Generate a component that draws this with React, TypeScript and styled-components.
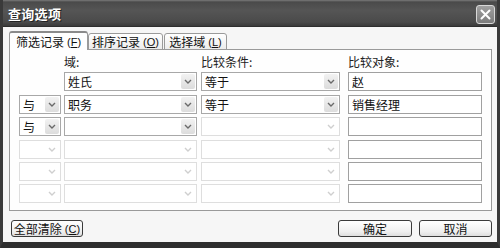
import React from "react";
import styled, { createGlobalStyle } from "styled-components";

const Global = createGlobalStyle`
  html, body { margin: 0; padding: 0; background: #fff; }
  body { font-family: "Noto Sans CJK SC", "Liberation Sans", sans-serif; font-size: 12px; }
`;

const Window = styled.div`
  width: 500px;
  height: 248px;
  box-sizing: border-box;
  background: #f6f6f6;
  border-left: 3px solid #3a3a3a;
  border-right: 3px solid #3a3a3a;
  border-bottom: 6px solid #2e2e2e;
  display: flex;
  flex-direction: column;
  overflow: hidden;
`;

const TitleBar = styled.div`
  height: 27px;
  margin: 0 -3px;
  padding: 0 5px 0 8px;
  box-sizing: border-box;
  display: flex;
  align-items: center;
  justify-content: space-between;
  background: linear-gradient(#7a7a7a 0, #4a4a4a 2px, #555 40%, #4a4a4a 85%, #3a3a3a 100%);
  border-bottom: 1px solid #2e2e2e;
`;

const Title = styled.span`
  color: #fff;
  font-weight: bold;
  font-size: 13px;
  letter-spacing: 0.3px;
  text-shadow: 1px 1px 0 #222;
`;

const CloseBtn = styled.div`
  width: 19px;
  height: 19px;
  box-sizing: border-box;
  margin-top: 2px;
  border: 1px solid #d8d8d8;
  border-radius: 3px;
  background: linear-gradient(#a0a0a0, #7c7c7c);
  display: flex;
  align-items: center;
  justify-content: center;
`;

const Body = styled.div`
  flex: 1;
  padding: 5px 5px 0 6px;
  display: flex;
  flex-direction: column;
`;

const Tabs = styled.div`
  display: flex;
  align-items: flex-end;
  height: 18px;
  position: relative;
  z-index: 1;
  margin-bottom: -1px;
`;

const Tab = styled.div<{ $active?: boolean; $w: number }>`
  width: ${(p) => p.$w}px;
  height: ${(p) => (p.$active ? 19 : 17)}px;
  box-sizing: border-box;
  border: 1px solid #9a9a9a;
  border-bottom: ${(p) => (p.$active ? "none" : "1px solid #9a9a9a")};
  border-radius: 3px 3px 0 0;
  background: ${(p) => (p.$active ? "#fefefe" : "linear-gradient(#ffffff, #ececec)")};
  display: flex;
  align-items: center;
  justify-content: center;
  color: #111;
  font-size: 12px;
  margin-right: ${(p) => (p.$active ? 0 : 1)}px;
  ${(p) => (p.$active ? "border-top: 2px solid #8a8a8a;" : "")}
`;

const Key = styled.span`
  font-family: "Liberation Sans", sans-serif;
  font-size: 11px;
  margin-left: 3px;
`;

const Panel = styled.div`
  height: 162px;
  box-sizing: border-box;
  border: 1px solid #9a9a9a;
  background: #fefefe;
  padding: 5px 6px 0 9px;
  display: grid;
  grid-template-columns: 42px 133px 140px 139px;
  column-gap: 3px;
  grid-auto-rows: 19px;
  row-gap: 3.4px;
  grid-template-rows: 14px;
  align-content: start;
`;

const Label = styled.div<{ $col: number }>`
  grid-column: ${(p) => p.$col};
  font-size: 12px;
  line-height: 14px;
  color: #222;
  margin-bottom: 1px;
`;

const Combo = styled.div<{ $disabled?: boolean; $ml?: number }>`
  box-sizing: border-box;
  height: 19px;
  margin-left: ${(p) => p.$ml || 0}px;
  border: 1px solid ${(p) => (p.$disabled ? "#dedede" : "#a8a8a8")};
  background: #fff;
  display: flex;
  align-items: center;
  padding-left: 3px;
  font-size: 12px;
  color: #111;
`;

const ComboText = styled.span`
  flex: 1;
  line-height: 17px;
`;

const DropBtn = styled.div<{ $disabled?: boolean }>`
  width: 14px;
  height: 15px;
  margin-right: 1px;
  border-radius: 2px;
  background: ${(p) => (p.$disabled ? "transparent" : "linear-gradient(#f2f2f2, #dcdcdc)")};
  display: flex;
  align-items: center;
  justify-content: center;
`;

const TextBox = styled.div<{ $ml?: number }>`
  box-sizing: border-box;
  height: 19px;
  margin-left: ${(p) => p.$ml || 0}px;
  border: 1px solid #a0a0a0;
  background: #fff;
  padding-left: 3px;
  font-size: 12px;
  line-height: 17px;
  color: #111;
`;

const Empty = styled.div``;

const Footer = styled.div`
  display: flex;
  align-items: center;
  margin-top: 9px;
  padding-left: 2px;
`;

const Button = styled.div<{ $w: number; $ml?: number }>`
  width: ${(p) => p.$w}px;
  height: 17px;
  box-sizing: border-box;
  margin-left: ${(p) => p.$ml || 0}px;
  border: 1px solid #3a3a3a;
  border-radius: 3px;
  background: linear-gradient(#ffffff, #efefef 70%, #dedede);
  display: flex;
  align-items: center;
  justify-content: center;
  font-size: 12px;
  color: #111;
`;

const Spacer = styled.div`
  flex: 1;
`;

const Chevron = ({ disabled }: { disabled?: boolean }) => (
  <svg width="8" height="5" viewBox="0 0 8 5">
    <path
      d="M1 1 L4 4 L7 1"
      fill="none"
      stroke={disabled ? "#cfcfcf" : "#6a6a6a"}
      strokeWidth="1.4"
    />
  </svg>
);

const ComboBox = ({ text, disabled, ml }: { text?: string; disabled?: boolean; ml?: number }) => (
  <Combo $disabled={disabled} $ml={ml}>
    <ComboText>{text}</ComboText>
    <DropBtn $disabled={disabled}>
      <Chevron disabled={disabled} />
    </DropBtn>
  </Combo>
);

type Row = {
  conj?: string | null;
  conjDisabled?: boolean;
  field?: string;
  fieldDisabled?: boolean;
  cond?: string;
  condDisabled?: boolean;
  value?: string;
};

const rows: Row[] = [
  { conj: null, field: "姓氏", cond: "等于", value: "赵" },
  { conj: "与", field: "职务", cond: "等于", value: "销售经理" },
  { conj: "与", field: "", cond: "", condDisabled: true, value: "" },
  { conj: "", conjDisabled: true, field: "", fieldDisabled: true, cond: "", condDisabled: true, value: "" },
  { conj: "", conjDisabled: true, field: "", fieldDisabled: true, cond: "", condDisabled: true, value: "" },
  { conj: "", conjDisabled: true, field: "", fieldDisabled: true, cond: "", condDisabled: true, value: "" },
];

export default function App() {
  return (
    <>
      <Global />
      <Window>
        <TitleBar>
          <Title>查询选项</Title>
          <CloseBtn>
            <svg width="11" height="11" viewBox="0 0 11 11">
              <path d="M1.5 1.5 L9.5 9.5 M9.5 1.5 L1.5 9.5" stroke="#fff" strokeWidth="2" strokeLinecap="round" />
            </svg>
          </CloseBtn>
        </TitleBar>
        <Body>
          <Tabs>
            <Tab $active $w={79}>
              筛选记录<Key>(<u>F</u>)</Key>
            </Tab>
            <Tab $w={75}>
              排序记录<Key>(<u>O</u>)</Key>
            </Tab>
            <Tab $w={63}>
              选择域<Key>(<u>L</u>)</Key>
            </Tab>
          </Tabs>
          <Panel>
            <Empty />
            <Label $col={2}>域:</Label>
            <Label $col={3}>
              <span style={{ marginLeft: 1 }}>比较条件:</span>
            </Label>
            <Label $col={4}>
              <span style={{ marginLeft: 5 }}>比较对象:</span>
            </Label>
            {rows.map((r, i) => (
              <React.Fragment key={i}>
                {r.conj === null ? (
                  <Empty />
                ) : (
                  <ComboBox text={r.conj} disabled={r.conjDisabled} />
                )}
                <ComboBox text={r.field} disabled={r.fieldDisabled} />
                <ComboBox text={r.cond} disabled={r.condDisabled} ml={1} />
                <TextBox $ml={5}>{r.value}</TextBox>
              </React.Fragment>
            ))}
          </Panel>
          <Footer>
            <Button $w={72}>
              全部清除<Key>(<u>C</u>)</Key>
            </Button>
            <Spacer />
            <Button $w={74}>确定</Button>
            <Button $w={73} $ml={7}>
              取消
            </Button>
          </Footer>
        </Body>
      </Window>
    </>
  );
}
